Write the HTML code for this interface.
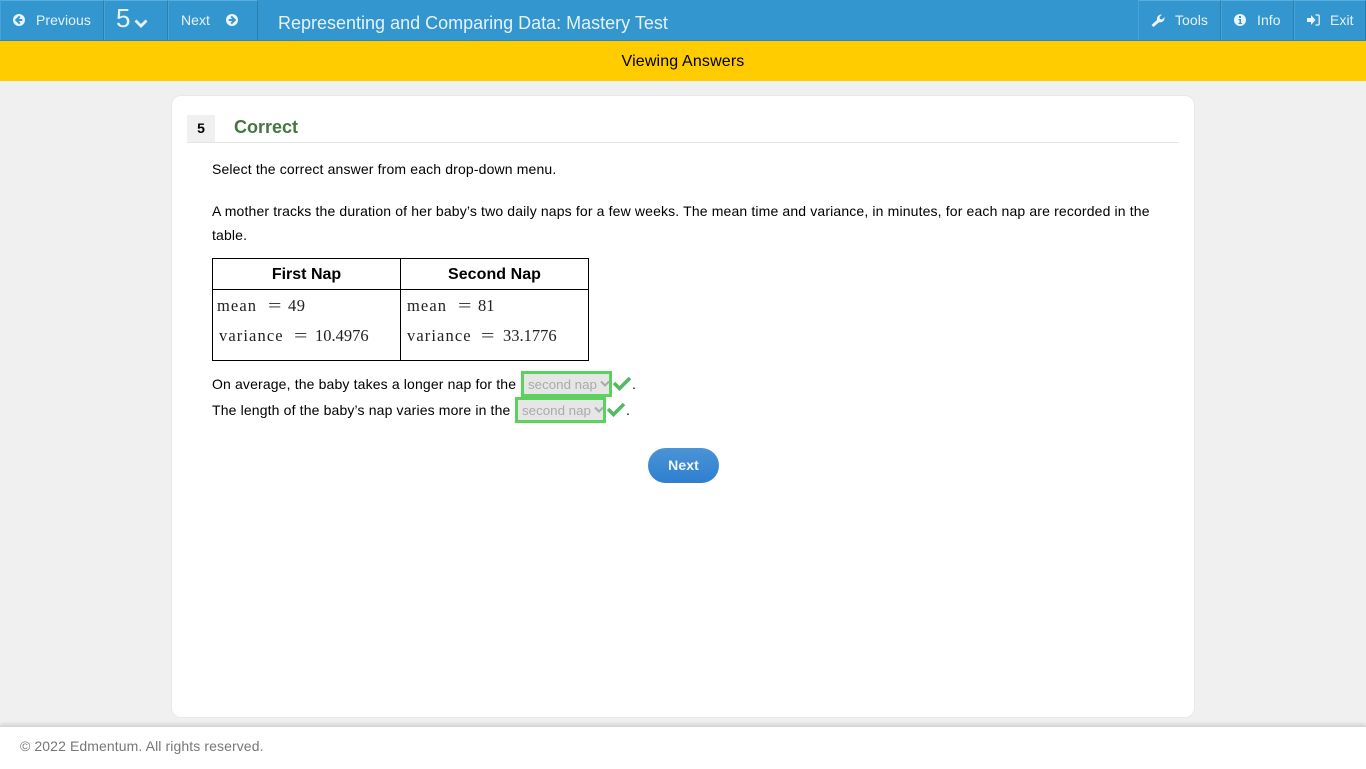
<!DOCTYPE html>
<html><head><meta charset="utf-8">
<style>
html,body{margin:0;padding:0;width:1366px;height:768px;overflow:hidden;background:#f0f0f0;font-family:"Liberation Sans",sans-serif;color:#000}
.abs{position:absolute;white-space:nowrap}
#bar{position:absolute;left:0;top:0;width:1366px;height:40px;background:#3396cf;border-bottom:1px solid #2d87b9}
.btn{position:absolute;top:0;height:40px;border-top:1px solid #5aaedd;box-sizing:border-box;border-left:1px solid #48a3d6;border-right:1px solid #2a80b0}
.nt{position:absolute;color:#e6f2f9;font-size:14px;letter-spacing:.05px;top:12px;white-space:nowrap;line-height:17px}
svg{position:absolute;display:block}
#yb{position:absolute;left:0;top:41px;width:1366px;height:40px;background:#fc0;text-align:center;font-size:16px;letter-spacing:.15px;line-height:42px}
#card{position:absolute;left:171px;top:95px;width:1024px;height:623px;box-sizing:border-box;background:#fff;border:1px solid #e8e8e8;border-radius:10px}
#foot{position:absolute;left:0;top:726px;width:1366px;height:42px;background:#fff;border-top:1px solid #d5d5d5;box-shadow:0 -2px 4px rgba(0,0,0,.12)}
.t{font-size:14px;line-height:24px;letter-spacing:.146px}
.sel{position:absolute;box-sizing:border-box;width:91px;height:26px;border:3px solid #5dd15d;background:#e6e6e6;color:#aaa;font-size:13.330px;line-height:21px;padding-left:4px;white-space:nowrap}
.m{font-family:"Liberation Serif",serif;font-size:16.500px;white-space:pre;position:absolute;color:#222;line-height:19px}
.w{letter-spacing:1.100px}
.e{font-size:17px;transform:scaleX(1.400);transform-origin:left center}
.d{letter-spacing:.5px}
</style></head><body>
<div id="bar"></div>
<div class="btn" style="left:0;width:104px"></div>
<div class="btn" style="left:104px;width:64px"></div>
<div class="btn" style="left:168px;width:90px"></div>
<div class="btn" style="left:1138px;width:83px"></div>
<div class="btn" style="left:1221px;width:73px"></div>
<div class="btn" style="left:1294px;width:72px"></div>

<svg style="left:13px;top:14px" width="12" height="12" viewBox="0 0 12 12"><circle cx="6" cy="6" r="6" fill="#eaf4fa"/><path d="M6.800 2.400 3.200 6l3.600 3.600M3.800 6h5.400" stroke="#3396cf" stroke-width="2" fill="none"/></svg>
<div class="nt" style="left:36px">Previous</div>
<div class="abs" style="left:116px;top:4px;font-size:26px;line-height:29px;color:#e6f2f9">5</div>
<svg style="left:134px;top:19px" width="14" height="9" viewBox="0 0 14 9"><path d="M1.500 1.500 7 7l5.500-5.500" stroke="#eaf4fa" stroke-width="2.800" fill="none"/></svg>
<div class="nt" style="left:181px">Next</div>
<svg style="left:226px;top:14px" width="12" height="12" viewBox="0 0 12 12"><circle cx="6" cy="6" r="6" fill="#eaf4fa"/><path d="M5.200 2.400 8.800 6 5.200 9.600M8.200 6H2.800" stroke="#3396cf" stroke-width="2" fill="none"/></svg>
<div class="abs" style="left:278px;top:13px;font-size:18px;line-height:20px;color:#e6f2f9">Representing and Comparing Data: Mastery Test</div>

<svg style="left:1151px;top:14px" width="14" height="13" viewBox="0 0 14 13"><path d="M.500 11 6 6C5.500 3 7.500 .300 11 .500L8.500 3l.5 2 2 .5L13.500 3C14 7 11 8.800 8 8.200L2.500 13Z" fill="#eaf4fa"/></svg>
<div class="nt" style="left:1175px">Tools</div>
<svg style="left:1234px;top:14px" width="12" height="12" viewBox="0 0 12 12"><circle cx="6" cy="6" r="6" fill="#eaf4fa"/><path d="M5 2h2v2H5zM4.500 5H7v4h1v1H4.500V9h1V6h-1z" fill="#3396cf"/></svg>
<div class="nt" style="left:1257px">Info</div>
<svg style="left:1307px;top:14px" width="13" height="12" viewBox="0 0 13 12"><path d="M0 4h4V1l4.500 5L4 11V8H0Z" fill="#eaf4fa"/><path d="M8.500 1H11q1.200 0 1.200 1.200v7.600Q12.200 11 11 11H8.500" stroke="#eaf4fa" stroke-width="1.300" fill="none"/></svg>
<div class="nt" style="left:1330px">Exit</div>

<div id="yb">Viewing Answers</div>

<div id="card"></div>
<div class="abs" style="left:187px;top:115px;width:28px;height:28px;background:#f0f0f0;text-align:center;font-weight:bold;font-size:14px;line-height:27px">5</div>
<div class="abs" style="left:187px;top:142px;width:992px;height:1px;background:#e4e4e4"></div>
<div class="abs" style="left:234px;top:116px;font-size:18px;font-weight:bold;line-height:22px;color:#44763f">Correct</div>

<div class="abs t" style="left:212px;top:157px">Select the correct answer from each drop-down menu.</div>
<div class="abs t" style="left:212px;top:199px">A mother tracks the duration of her baby’s two daily naps for a few weeks. The mean time and variance, in minutes, for each nap are recorded in the</div>
<div class="abs t" style="left:212px;top:223px">table.</div>

<div class="abs" style="left:212px;top:258px;width:377px;height:103px;box-sizing:border-box;border:1px solid #000"></div>
<div class="abs" style="left:400px;top:258px;width:1px;height:103px;background:#000"></div>
<div class="abs" style="left:212px;top:289px;width:377px;height:1px;background:#000"></div>
<div class="abs" style="left:213px;top:265px;width:187px;text-align:center;font-weight:bold;font-size:16px;line-height:19px">First Nap</div>
<div class="abs" style="left:401px;top:265px;width:187px;text-align:center;font-weight:bold;font-size:16px;letter-spacing:.05px;line-height:19px">Second Nap</div>

<div class="m w" style="left:217px;top:296px">mean</div><div class="m e" style="left:268px;top:296px">=</div><div class="m d" style="left:288px;top:296px">49</div>
<div class="m w" style="left:219px;top:326px">variance</div><div class="m e" style="left:294px;top:326px">=</div><div class="m" style="left:315px;top:326px">10.4976</div>
<div class="m w" style="left:407px;top:296px">mean</div><div class="m e" style="left:458px;top:296px">=</div><div class="m" style="left:478px;top:296px">81</div>
<div class="m w" style="left:407px;top:326px">variance</div><div class="m e" style="left:481px;top:326px">=</div><div class="m" style="left:503px;top:326px">33.1776</div>

<div class="abs t" style="left:212px;top:372px">On average, the baby takes a longer nap for the</div>
<div class="sel" style="left:521px;top:371px">second nap</div>
<svg style="left:600px;top:380px" width="11" height="8" viewBox="0 0 11 8"><path d="M1 1.500 5 5.500 9 1.500" stroke="#aaa" stroke-width="2" fill="none"/></svg>
<svg style="left:612px;top:376px" width="20" height="15" viewBox="0 0 20 15"><path d="M2 7 7.500 12.500 18 2" stroke="#55b963" stroke-width="3.600" fill="none"/></svg>
<div class="abs t" style="left:632px;top:372px">.</div>

<div class="abs t" style="left:212px;top:398px">The length of the baby’s nap varies more in the</div>
<div class="sel" style="left:515px;top:397px">second nap</div>
<svg style="left:594px;top:406px" width="11" height="8" viewBox="0 0 11 8"><path d="M1 1.500 5 5.500 9 1.500" stroke="#aaa" stroke-width="2" fill="none"/></svg>
<svg style="left:606px;top:402px" width="20" height="15" viewBox="0 0 20 15"><path d="M2 7 7.500 12.500 18 2" stroke="#55b963" stroke-width="3.600" fill="none"/></svg>
<div class="abs t" style="left:626px;top:398px">.</div>

<div class="abs" style="left:648px;top:448px;width:71px;height:35px;border-radius:18px;background:linear-gradient(#4a94d6,#2f7fd0);color:#f0f6fc;font-weight:bold;font-size:14px;letter-spacing:.1px;line-height:35px;text-align:center">Next</div>

<div id="foot"></div>
<div class="abs" style="left:20px;top:737px;font-size:14px;letter-spacing:.1px;line-height:18px;color:#777">© 2022 Edmentum. All rights reserved.</div>
</body></html>
